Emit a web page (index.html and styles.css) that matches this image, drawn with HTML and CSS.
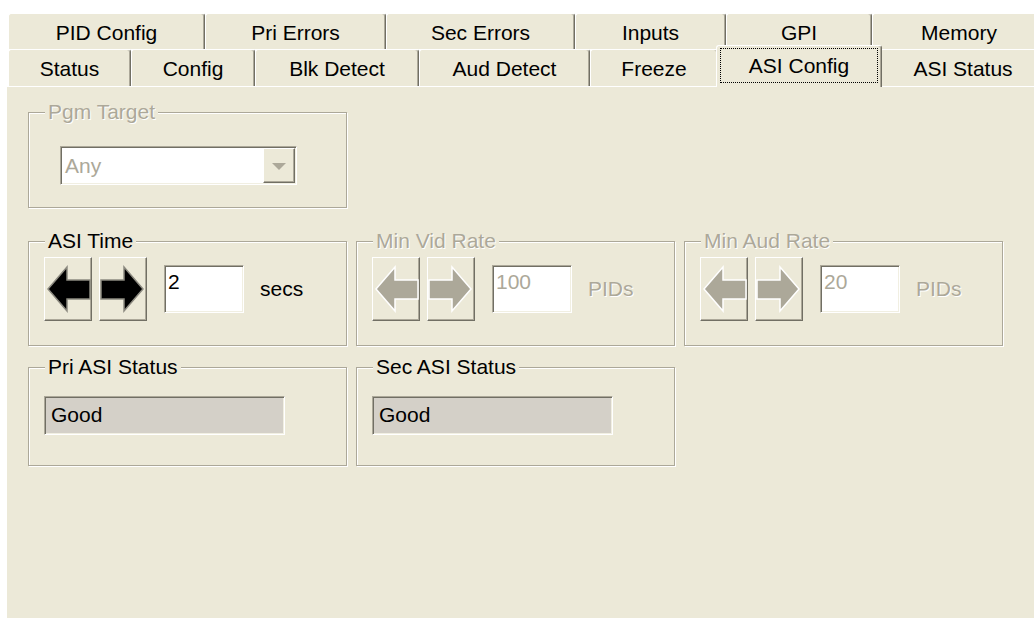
FILE: index.html
```html
<!DOCTYPE html>
<html lang="en">
<head>
<meta charset="utf-8">
<title>ASI Config</title>
<link rel="stylesheet" href="styles.css">
</head>
<body>
<div class="tabctl">
  <div class="tabrow tabrow-back">
    <div class="tab">PID Config</div>
    <div class="tab">Pri Errors</div>
    <div class="tab">Sec Errors</div>
    <div class="tab">Inputs</div>
    <div class="tab">GPI</div>
    <div class="tab">Memory</div>
  </div>
  <div class="tabrow tabrow-front">
    <div class="tab">Status</div>
    <div class="tab">Config</div>
    <div class="tab">Blk Detect</div>
    <div class="tab">Aud Detect</div>
    <div class="tab">Freeze</div>
    <div class="tab tab-active"><span class="focus">ASI Config</span></div>
    <div class="tab">ASI Status</div>
  </div>

  <div class="page">
    <div class="row row-a">
      <div class="group group-a">
        <div class="group-title disabled">Pgm Target</div>
        <div class="combo">
          <span class="combo-text disabled">Any</span>
          <span class="combo-btn">
            <svg width="14" height="7" viewBox="0 0 14 7"><polygon points="0,0 14,0 7,7" fill="#ACA899"/></svg>
          </span>
        </div>
      </div>
    </div>

    <div class="row row-b">
      <div class="group group-b">
        <div class="group-title">ASI Time</div>
        <div class="ctrl-row">
          <button class="arrow-btn" type="button">
            <svg viewBox="0 0 46 62"><polygon points="3,31 22,9 22,22 45,22 45,41 22,41 22,53" fill="#000" stroke="#8C8A80" stroke-width="1.5"/></svg>
          </button>
          <button class="arrow-btn" type="button">
            <svg viewBox="0 0 46 62"><polygon points="43,31 24,9 24,22 1,22 1,41 24,41 24,53" fill="#000" stroke="#8C8A80" stroke-width="1.5"/></svg>
          </button>
          <div class="field">2</div>
          <span class="unit">secs</span>
        </div>
      </div>
      <div class="group group-b">
        <div class="group-title disabled">Min Vid Rate</div>
        <div class="ctrl-row">
          <button class="arrow-btn" type="button" disabled>
            <svg viewBox="0 0 46 62"><polygon points="3,31 22,9 22,22 45,22 45,41 22,41 22,53" fill="#ACA899" stroke="#fff" stroke-width="1.5"/></svg>
          </button>
          <button class="arrow-btn" type="button" disabled>
            <svg viewBox="0 0 46 62"><polygon points="43,31 24,9 24,22 1,22 1,41 24,41 24,53" fill="#ACA899" stroke="#fff" stroke-width="1.5"/></svg>
          </button>
          <div class="field disabled">100</div>
          <span class="unit disabled">PIDs</span>
        </div>
      </div>
      <div class="group group-b">
        <div class="group-title disabled">Min Aud Rate</div>
        <div class="ctrl-row">
          <button class="arrow-btn" type="button" disabled>
            <svg viewBox="0 0 46 62"><polygon points="3,31 22,9 22,22 45,22 45,41 22,41 22,53" fill="#ACA899" stroke="#fff" stroke-width="1.5"/></svg>
          </button>
          <button class="arrow-btn" type="button" disabled>
            <svg viewBox="0 0 46 62"><polygon points="43,31 24,9 24,22 1,22 1,41 24,41 24,53" fill="#ACA899" stroke="#fff" stroke-width="1.5"/></svg>
          </button>
          <div class="field disabled">20</div>
          <span class="unit disabled">PIDs</span>
        </div>
      </div>
    </div>

    <div class="row row-c">
      <div class="group group-c">
        <div class="group-title">Pri ASI Status</div>
        <div class="status">Good</div>
      </div>
      <div class="group group-c">
        <div class="group-title">Sec ASI Status</div>
        <div class="status">Good</div>
      </div>
    </div>
  </div>
</div>
</body>
</html>
```

FILE: styles.css
```css
* {
  box-sizing: border-box;
}

html,
body {
  margin: 0;
  padding: 0;
  background: #fff;
  overflow: hidden;
}

body {
  width: 1034px;
  height: 618px;
  font-family: "Liberation Sans", Arial, sans-serif;
  font-size: 21px;
  color: #000;
}

/* ---------- tab strip ---------- */

.tabctl {
  margin: 13px 0 0 6px;
  width: 1040px;
}

.tabrow {
  display: grid;
  padding-left: 2px;
}

.tabrow-back {
  grid-template-columns: 197px 181px 189px 151px 146px 1fr;
  height: 36px;
}

.tabrow-front {
  grid-template-columns: 123px 124px 164px 171px 128px 162px 1fr;
  height: 37px;
}

.tab {
  display: flex;
  align-items: center;
  justify-content: center;
  background: #ECE9D8;
  border-top: 1px solid #fff;
  border-left: 1px solid #fff;
  border-right: 1px solid #716F64;
  box-shadow: inset -1px 0 0 #ACA899;
  border-radius: 3px 3px 0 0;
  line-height: 24px;
  white-space: nowrap;
}

.tabrow-back .tab {
  padding-top: 2px;
}

.tabrow-front .tab {
  padding-top: 1px;
}

.tabrow-front .tab-active {
  margin: -4px -2px -1px;
  padding: 0;
  z-index: 1;
  align-items: stretch;
}

.focus {
  flex: 1;
  display: flex;
  align-items: center;
  justify-content: center;
  margin: 2px 3px 4px;
  border: 1px dotted #000;
}

/* ---------- page body ---------- */

.page {
  height: 532px;
  background: #ECE9D8;
  border-top: 1px solid #fff;
  border-left: 1px solid #fff;
  padding: 25px 0 0 21px;
}

.row {
  display: grid;
  grid-template-columns: repeat(3, 319px);
  column-gap: 9px;
}

.row-a {
  margin-bottom: 33px;
}

.row-b {
  margin-bottom: 21px;
}

/* etched group frame */
.group {
  display: flex;
  flex-direction: column;
  align-items: flex-start;
  border: 1px solid #ACA899;
  box-shadow: 1px 1px 0 #fff, inset 1px 1px 0 #fff;
}

.group-a {
  height: 96px;
}

.group-b {
  height: 105px;
}

.group-c {
  height: 99px;
}

.group-title {
  margin: -13px 0 0 16px;
  padding: 0 3px;
  height: 24px;
  line-height: 24px;
  background: #ECE9D8;
  white-space: nowrap;
}

.disabled {
  color: #ACA899;
  text-shadow: 1px 1px 0 #fff;
}

/* sunken 3D edge shared by the edit boxes */
.combo,
.field,
.status {
  border: 1px solid;
  border-color: #ACA899 #fff #fff #ACA899;
  box-shadow: inset 1px 1px 0 #716F64, inset -1px -1px 0 #F1EFE2;
}

/* ---------- drop-down ---------- */

.combo {
  display: flex;
  align-items: center;
  margin: 22px 0 0 31px;
  width: 237px;
  height: 39px;
  padding: 1px;
  background: #fff;
}

.combo-text {
  padding-left: 3px;
  line-height: 24px;
}

.combo-btn {
  margin-left: auto;
  width: 32px;
  height: 35px;
  display: flex;
  align-items: center;
  justify-content: center;
  background: #ECE9D8;
  border: 1px solid;
  border-color: #fff #716F64 #716F64 #fff;
  box-shadow: inset -1px -1px 0 #ACA899;
}

.combo-btn svg {
  display: block;
  margin-top: 1px;
}

/* ---------- spinner rows ---------- */

.ctrl-row {
  display: flex;
  align-items: center;
  margin: 4px 0 0 15px;
}

.arrow-btn {
  width: 48px;
  height: 64px;
  padding: 0;
  margin: 0 7px 0 0;
  background: #ECE9D8;
  border: 1px solid;
  border-color: #fff #716F64 #716F64 #fff;
  box-shadow: inset -1px -1px 0 #ACA899;
  border-radius: 0;
}

.arrow-btn svg {
  display: block;
  width: 46px;
  height: 62px;
}

.field {
  width: 80px;
  height: 48px;
  margin-left: 10px;
  padding: 4px 3px 0;
  line-height: 24px;
  background: #fff;
}

.unit {
  margin-left: 16px;
  line-height: 24px;
}

/* ---------- status read-outs ---------- */

.status {
  margin: 17px 0 0 15px;
  width: 241px;
  height: 39px;
  padding-left: 6px;
  line-height: 36px;
  background: #D4D0C8;
}
```
